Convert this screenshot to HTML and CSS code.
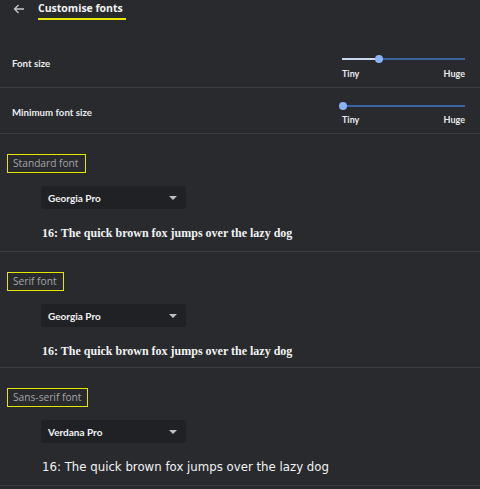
FILE: index.html
```html
<!DOCTYPE html>
<html>
<head>
<meta charset="utf-8">
<link rel="stylesheet" href="styles.css">
</head>
<body>
<div class="page">
  <header class="header">
    <svg class="back" width="12" height="10" viewBox="0 0 12 10"><path d="M11 5H1.5M5.5 1L1.5 5l4 4" fill="none" stroke="#c4c7c5" stroke-width="1.3"/></svg>
    <h1 class="title">Customise fonts</h1>
  </header>
  <div class="row row-first">
    <span class="row-label">Font size</span>
    <div class="slider">
      <div class="track"><div class="active" style="width:36px"></div><div class="knob" style="left:36px"></div></div>
      <div class="ticks"><span>Tiny</span><span>Huge</span></div>
    </div>
  </div>
  <div class="row">
    <span class="row-label">Minimum font size</span>
    <div class="slider">
      <div class="track"><div class="active" style="width:0"></div><div class="knob" style="left:0"></div></div>
      <div class="ticks"><span>Tiny</span><span>Huge</span></div>
    </div>
  </div>
  <section class="section">
    <div class="legend">Standard font</div>
    <div class="select"><span>Georgia Pro</span><span class="caret"></span></div>
    <p class="sample serif">16: The quick brown fox jumps over the lazy dog</p>
  </section>
  <section class="section section-short">
    <div class="legend">Serif font</div>
    <div class="select"><span>Georgia Pro</span><span class="caret"></span></div>
    <p class="sample serif">16: The quick brown fox jumps over the lazy dog</p>
  </section>
  <section class="section">
    <div class="legend">Sans-serif font</div>
    <div class="select"><span>Verdana Pro</span><span class="caret"></span></div>
    <p class="sample sans">16: The quick brown fox jumps over the lazy dog</p>
  </section>
</div>
</body>
</html>
```
FILE: styles.css
```css
html, body {
  margin: 0;
  padding: 0;
  background: #292a2d;
}
body {
  font-family: Lato, "Noto Sans", sans-serif;
  color: #e8eaed;
  width: 480px;
  height: 489px;
  overflow: hidden;
}
.page {
  display: flex;
  flex-direction: column;
}
.header {
  display: flex;
  align-items: flex-start;
  height: 42px;
  box-sizing: border-box;
  padding-top: 2px;
}
.back {
  margin: 2px 0 0 13px;
}
.title {
  margin: 0 0 0 13px;
  font-family: "Open Sans", Lato, sans-serif;
  font-size: 10.5px;
  font-weight: 700;
  color: #f1f3f4;
  line-height: 13px;
  padding: 0 3px 3px 0;
  border-bottom: 2px solid #e6e600;
}
.row {
  display: flex;
  justify-content: space-between;
  align-items: flex-start;
  height: 46px;
  box-sizing: border-box;
  border-bottom: 1px solid #3c3d41;
  padding: 14px 15px 0 12px;
}
.row-label {
  font-size: 9.7px;
  font-weight: 700;
  margin-top: 4px;
  color: #e8eaed;
}
.row-first .row-label {
  margin-top: 1px;
}
.row-first .track {
  margin-top: 2px;
}
.row-first .ticks {
  margin-top: 8px;
}
.slider {
  width: 123px;
  display: flex;
  flex-direction: column;
}
.track {
  position: relative;
  height: 2px;
  background: #3f63a0;
  margin-top: 3px;
}
.active {
  position: absolute;
  left: 0;
  top: 0;
  height: 2px;
  background: #c8d7f0;
}
.knob {
  position: absolute;
  top: -3px;
  width: 8px;
  height: 8px;
  margin-left: -3px;
  border-radius: 50%;
  background: #8ab4f8;
}
.ticks {
  display: flex;
  justify-content: space-between;
  font-size: 9px;
  font-weight: 700;
  margin-top: 7px;
  color: #e8eaed;
}
.section {
  border-bottom: 1px solid #3c3d41;
  box-sizing: border-box;
  height: 118px;
  padding: 20px 0 0 7px;
  display: flex;
  flex-direction: column;
  align-items: flex-start;
}
.section-short {
  height: 116px;
}
.legend {
  border: 1px solid #e6e600;
  font-family: "Open Sans", Lato, sans-serif;
  font-size: 10.2px;
  color: #a3a5a8;
  padding: 2px 6px 2px 5px;
  line-height: 13px;
}
.select {
  margin: 13px 0 0 34px;
  width: 145px;
  height: 23px;
  box-sizing: border-box;
  background: #202124;
  border-radius: 3px;
  display: flex;
  align-items: center;
  justify-content: space-between;
  padding: 0 9px 0 7px;
  font-size: 10px;
  font-weight: 700;
  color: #f1f3f4;
}
.caret {
  width: 0;
  height: 0;
  border-left: 4px solid transparent;
  border-right: 4px solid transparent;
  border-top: 4px solid #bdc1c6;
}
.sample {
  margin: 17px 0 0 35px;
  color: #f1f3f4;
  white-space: nowrap;
}
.serif {
  font-family: "Liberation Serif", serif;
  font-size: 12px;
  font-weight: 700;
}
.sans {
  font-family: "DejaVu Sans", sans-serif;
  font-size: 11.75px;
}
```
